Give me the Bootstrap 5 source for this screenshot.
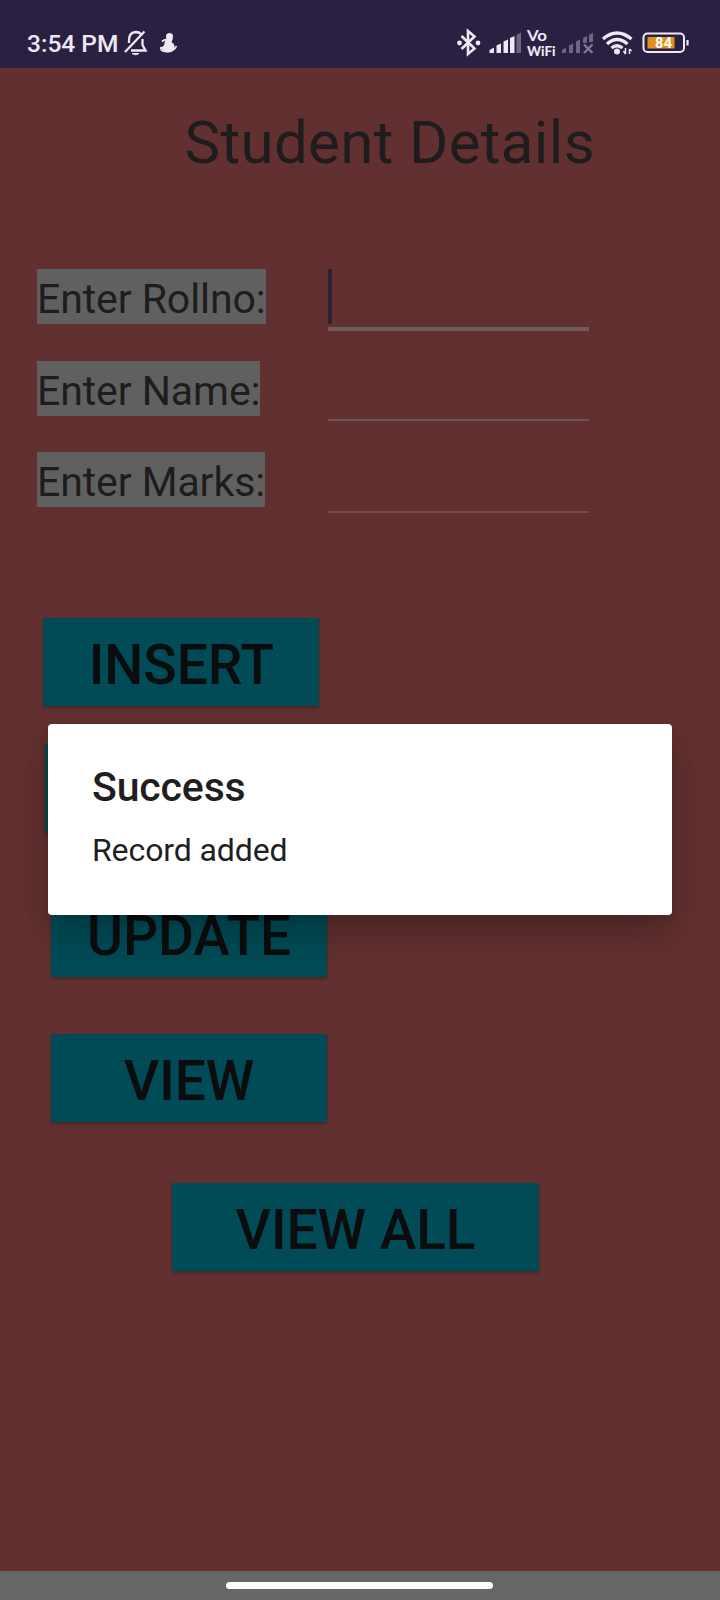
<!DOCTYPE html>
<html lang="en">
<head>
<meta charset="utf-8">
<meta name="viewport" content="width=device-width, initial-scale=1">
<title>Student Details</title>
<link rel="stylesheet" href="https://cdn.jsdelivr.net/npm/bootstrap@5.3.0/dist/css/bootstrap.min.css">
<style>
body { font-family: Roboto, "Liberation Sans", sans-serif; background: #623030; color: #1f1c1e; }
.screen { width: 720px; height: 1600px; }
.status-bar { height: 68px; background: #2a2042; color: #eee8f5; padding: 18px 30px 0 27px; }
.clock { font-size: 24.5px; font-weight: 500; line-height: 52px; width: 94px; }
.form-title { font-size: 60px; line-height: 80px; letter-spacing: .35px; margin: 35px 0 0 184.5px; font-weight: 400; }
.fields { padding: 86px 0 0 37px; }
.field-line { height: 91.7px; }
.field-name { background: #606060; font-size: 41px; line-height: 51px; padding-top: 5px; height: 55px; letter-spacing: -.08px; }
.field-slot { width: 291px; }
.entry { width: 261px; height: 60.4px; border: 0; border-bottom: 2px solid #6b5450; border-radius: 0; background: transparent; padding: 0; }
.entry-active { height: 62px; border-bottom: 4px solid #6c5d59; }
.caret { width: 4px; height: 55px; background: #2b2430; }
.actions { padding-top: 74px; }
.btn-action { --bs-btn-bg: #004b55; --bs-btn-color: #0b0c0e; width: 276px; height: 88px; padding: 6px 0 0; border: 0; border-radius: 1px; font-size: 55px; font-weight: 500; line-height: 82px; box-shadow: 0 2px 3px rgba(0,0,0,.25); }
.act-insert { margin-left: 43.4px; }
.act-second { margin: 38px 0 0 45px; }
.act-update { margin: 57px 0 0 51px; }
.act-view { margin: 57px 0 0 51px; }
.act-all { margin: 61px 0 0 172px; width: 367px; }
.notice { left: 48px; top: 724px; width: 624px; height: 190.5px; border: 0; border-radius: 4px; padding: 38px 44px; box-shadow: 0 18px 36px rgba(0,0,0,.24), 0 4px 8px rgba(0,0,0,.05); color: #1f1f1f; background: #fff; }
.notice-title { font-size: 41px; font-weight: 500; line-height: 51px; margin: 0; letter-spacing: -.15px; }
.notice-text { font-size: 32px; line-height: 40px; margin: 17px 0 0; letter-spacing: -.1px; }
.gesture-bar { height: 29.5px; background: #666; }
.handle { width: 267px; height: 7px; background: #fff; border-radius: 4px; margin: 11.5px 0 0 226px; }
</style>
</head>
<body>
<main class="screen position-relative d-flex flex-column overflow-hidden">
  <header class="status-bar d-flex">
    <span class="clock text-nowrap">3:54 PM</span>
    <!-- muted bell and figure -->
    <svg width="64" height="50" viewBox="121 18 64 50" fill="none" stroke="#eee8f5" stroke-width="2.300">
      <path d="M129 43V40Q129 32.500 136 32Q139 32 141 34M142.500 39V45L145.500 50.500H131M144.500 31.500L125 52"/>
      <path d="M132 53.500H139Q136 56 132 53.500" fill="#eee8f5" stroke-width="1"/>
      <g fill="#eee8f5" stroke="none"><circle cx="169.500" cy="36.500" r="3.500"/><path d="M166 38.500H173L171.500 42Q175 44 174.500 48Q173 52.500 168 52.500Q163 52 161 47Q164 47 164.500 43Z"/></g>
      <path d="M162 41.500Q165 39 168 40M161 47Q160 51 165 51.500Q174 52 176.500 46" stroke-width="1.700"/>
    </svg>
    <svg class="ms-auto" width="234" height="50" viewBox="456 18 234 50" fill="none" stroke="#eee8f5">
      <path d="M461.500 36L474.500 48.500L468 54V31L474.500 36.500L461.500 49" stroke-width="2.600"/>
      <circle cx="459.500" cy="43" r="2.400" fill="#eee8f5" stroke="none"/><circle cx="478" cy="43" r="2.400" fill="#eee8f5" stroke="none"/>
      <g fill="#eee8f5" stroke="none">
        <path d="M489.500 53V50L494 47.500V53ZM496.500 53V45.500L501 43.500V53ZM503.500 53V41.500L508 39.500V53ZM510 53V38L514.500 36V53Z"/>
        <path d="M516.500 53V35L521 32.500V53Z" opacity=".35"/>
        <text x="527" y="40.500" font-family="Lato" font-size="14.500" font-weight="700" textLength="20" lengthAdjust="spacingAndGlyphs">Vo</text>
        <text x="527" y="55.500" font-family="Lato" font-size="13.500" font-weight="900" textLength="28.500" lengthAdjust="spacingAndGlyphs">WiFi</text>
        <path d="M562 53V50L566 47.500V53ZM569 53V45.500L573 43.500V53ZM576 53V41.500L580 39.500V53ZM583 43V38L587 36V43ZM589 42V35L593 32.500V42Z" opacity=".35"/>
      </g>
      <path d="M584 44.500L592.500 53M592.500 44.500L584 53" stroke-width="2.300" opacity=".45"/>
      <path d="M603 39Q617 27 631.500 39M607 44Q617 35 627.500 44M611.500 48Q617 43.500 622.500 48" stroke-width="3.300"/>
      <circle cx="617" cy="51.500" r="3" fill="#eee8f5" stroke="none"/>
      <path d="M625.500 48V54M629.500 49V54M623.500 51L625.500 54M631.500 51L629.500 49" stroke-width="1.500"/>
      <rect x="643.500" y="33.500" width="40.500" height="18.500" rx="4" stroke-width="2"/>
      <rect x="647.500" y="37" width="27" height="11.500" fill="#dc921b" stroke="none"/>
      <path d="M687.500 40V45.500" stroke-width="2.200"/>
      <text x="655" y="48" fill="#fff" stroke="none" font-family="Roboto" font-size="14.500" font-weight="700" textLength="17">84</text>
    </svg>
  </header>

  <h1 class="form-title text-nowrap mb-0">Student Details</h1>

  <form class="fields">
    <div class="field-line d-flex">
      <div class="field-slot"><label class="field-name d-inline-block text-nowrap" for="rollno">Enter Rollno:</label></div>
      <div id="rollno" class="entry entry-active"><div class="caret"></div></div>
    </div>
    <div class="field-line d-flex">
      <div class="field-slot"><label class="field-name d-inline-block text-nowrap" for="name">Enter Name:</label></div>
      <input id="name" class="entry" type="text">
    </div>
    <div class="field-line d-flex">
      <div class="field-slot"><label class="field-name d-inline-block text-nowrap" for="marks">Enter Marks:</label></div>
      <input id="marks" class="entry" type="text">
    </div>
  </form>

  <div class="actions d-flex flex-column align-items-start">
    <button class="btn btn-action act-insert">INSERT</button>
    <button class="btn btn-action act-second"></button>
    <button class="btn btn-action act-update">UPDATE</button>
    <button class="btn btn-action act-view">VIEW</button>
    <button class="btn btn-action act-all">VIEW ALL</button>
  </div>

  <footer class="gesture-bar mt-auto d-flex"><div class="handle"></div></footer>

  <section class="notice card position-absolute" role="dialog">
    <h2 class="notice-title">Success</h2>
    <p class="notice-text">Record added</p>
  </section>
</main>
<script src="https://cdn.jsdelivr.net/npm/bootstrap@5.3.0/dist/js/bootstrap.bundle.min.js"></script>
</body>
</html>
